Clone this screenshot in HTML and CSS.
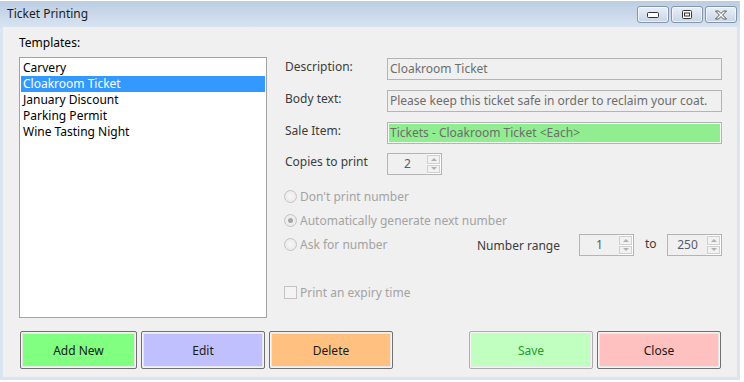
FILE: index.html
```html
<!DOCTYPE html>
<html lang="en">
<head>
  <meta charset="UTF-8">
  <title>Ticket Printing</title>
  <link rel="stylesheet" href="styles.css">
</head>
<body>

  <div class="window">
    <div class="titlebar">
      <span class="title">Ticket Printing</span>
      <div class="caption-buttons">
        <span class="cap-btn">
          <svg width="12" height="6" viewBox="0 0 12 6"><rect x="0.5" y="0.5" width="11" height="5" rx="1" fill="#fff" stroke="#333"/></svg>
        </span>
        <span class="cap-btn">
          <svg width="10" height="9" viewBox="0 0 10 9"><rect x="0.5" y="0.5" width="9" height="8" rx="1" fill="#fff" stroke="#333"/><rect x="2.5" y="3" width="5" height="3" fill="none" stroke="#333"/></svg>
        </span>
        <span class="cap-btn">
          <svg width="14" height="10" viewBox="0 0 14 10"><path d="M1.5 1 L4.5 1 L7 3.5 L9.5 1 L12.5 1 L8.6 5 L12.5 9 L9.5 9 L7 6.5 L4.5 9 L1.5 9 L5.4 5 Z" fill="#fff" stroke="#555" stroke-linejoin="round"/></svg>
        </span>
      </div>
    </div>

    <div class="client">
      <div class="main">
        <div class="templates">
          <div class="templates-label">Templates:</div>
          <ul class="listbox">
            <li>Carvery</li>
            <li class="selected">Cloakroom Ticket</li>
            <li>January Discount</li>
            <li>Parking Permit</li>
            <li>Wine Tasting Night</li>
          </ul>
        </div>

        <div class="details">
          <div class="field-row">
            <span class="label">Description:</span>
            <div class="textbox">Cloakroom Ticket</div>
          </div>
          <div class="field-row">
            <span class="label">Body text:</span>
            <div class="textbox">Please keep this ticket safe in order to reclaim your coat.</div>
          </div>
          <div class="field-row">
            <span class="label">Sale Item:</span>
            <div class="textbox sale">Tickets - Cloakroom Ticket &lt;Each&gt;</div>
          </div>
          <div class="field-row copies">
            <span class="label">Copies to print</span>
            <div class="spinner">
              <span class="spin-value">2</span>
              <span class="spin-arrows"><span class="up"></span><span class="down"></span></span>
            </div>
          </div>

          <div class="radios">
            <div class="radio-row">
              <span class="radio"></span>
              <span class="disabled">Don't print number</span>
            </div>
            <div class="radio-row">
              <span class="radio checked"></span>
              <span class="disabled">Automatically generate next number</span>
            </div>
            <div class="radio-row">
              <span class="radio"></span>
              <span class="disabled">Ask for number</span>
              <div class="range">
                <span class="range-label">Number range</span>
                <div class="spinner">
                  <span class="spin-value">1</span>
                  <span class="spin-arrows"><span class="up"></span><span class="down"></span></span>
                </div>
                <span class="range-to">to</span>
                <div class="spinner">
                  <span class="spin-value">250</span>
                  <span class="spin-arrows"><span class="up"></span><span class="down"></span></span>
                </div>
              </div>
            </div>
          </div>

          <div class="check-row">
            <span class="checkbox"></span>
            <span class="disabled">Print an expiry time</span>
          </div>
        </div>
      </div>

      <div class="buttons">
        <div class="btn-group">
          <button class="btn add">Add New</button>
          <button class="btn edit">Edit</button>
          <button class="btn delete">Delete</button>
        </div>
        <div class="btn-group">
          <button class="btn save">Save</button>
          <button class="btn close">Close</button>
        </div>
      </div>
    </div>
  </div>

</body>
</html>
```

FILE: styles.css
```css
body {
  margin: 0;
  background: #fff;
  font-family: "Noto Sans", "DejaVu Sans", sans-serif;
  font-size: 12px;
  color: #000;
}
.window {
  width: 740px;
  height: 379px;
  margin-top: 1px;
  background: #dbe5f1;
  display: flex;
  flex-direction: column;
  box-sizing: border-box;
  padding: 0 3px 3px 3px;
}
.titlebar {
  height: 26px;
  display: flex;
  align-items: center;
  justify-content: space-between;
  background: linear-gradient(#bccde2, #d7e3f1);
  margin: 0 -3px 0 -3px;
  padding: 0 3px 0 7px;
}
.title {
  color: #1e1e1e;
  font-size: 12px;
  margin-top: -2px;
}
.caption-buttons {
  display: flex;
  gap: 2px;
  align-self: flex-start;
  margin-top: 5px;
}
.cap-btn {
  width: 30px;
  height: 15px;
  border: 1px solid #8595ab;
  border-radius: 3px;
  background: linear-gradient(#e9eff7, #c9d6e6);
  display: flex;
  align-items: center;
  justify-content: center;
  box-shadow: inset 0 0 0 1px rgba(255,255,255,0.6);
}
.client {
  flex: 1;
  background: #f0f0f0;
  padding: 8px 0 0 16px;
}
.main {
  display: flex;
}
.templates {
  width: 248px;
  margin-right: 18px;
}
.templates-label {
  height: 16px;
  line-height: 16px;
}
.listbox {
  list-style: none;
  margin: 6px 0 0;
  padding: 2px 1px;
  height: 261px;
  box-sizing: border-box;
  background: #fff;
  border: 1px solid #a3a3a3;
}
.listbox li {
  height: 16px;
  line-height: 16px;
  padding-left: 2px;
  color: #000;
}
.listbox li.selected {
  background: #3399ff;
  color: #fff;
}
.details {
  width: 437px;
  margin-top: 23px;
}
.field-row {
  display: grid;
  grid-template-columns: 102px 335px;
  margin-bottom: 10px;
}
.field-row.copies {
  margin-top: -1px;
  margin-bottom: 0;
}
.label {
  color: #3c3c3c;
  line-height: 16px;
  padding-top: 1px;
}
.textbox {
  height: 22px;
  box-sizing: border-box;
  border: 1px solid #b4b4b4;
  background: #f0f0f0;
  color: #6d6d6d;
  line-height: 20px;
  padding-left: 2px;
  white-space: nowrap;
  overflow: hidden;
}
.textbox.sale {
  background: #90ee90;
  box-shadow: inset 0 0 0 1px #f4fff4;
}
.spinner {
  width: 55px;
  height: 22px;
  box-sizing: border-box;
  border: 1px solid #b4b4b4;
  background: #f0f0f0;
  display: flex;
}
.spin-value {
  flex: 1;
  text-align: center;
  line-height: 20px;
  color: #5a5a6e;
}
.spin-arrows {
  width: 13px;
  display: flex;
  flex-direction: column;
  background: #fff;
  padding: 1px 1px 1px 0;
  gap: 1px;
}
.spin-arrows span {
  flex: 1;
  border: 1px solid #d0d0d0;
  background: #f2f2f2;
  display: flex;
  align-items: center;
  justify-content: center;
}
.spin-arrows .up::after {
  content: "";
  border-left: 3px solid transparent;
  border-right: 3px solid transparent;
  border-bottom: 3px solid #b0b0b0;
}
.spin-arrows .down::after {
  content: "";
  border-left: 3px solid transparent;
  border-right: 3px solid transparent;
  border-top: 3px solid #b0b0b0;
}
.radios {
  margin-top: 9px;
  margin-left: -1px;
}
.radio-row, .check-row {
  height: 24px;
  display: flex;
  align-items: center;
}
.radio {
  width: 11px;
  height: 11px;
  border: 1px solid #c4c4c4;
  border-radius: 50%;
  background: radial-gradient(#f8f8f8, #e4e4e4);
  margin-right: 3px;
  display: flex;
  align-items: center;
  justify-content: center;
}
.radio.checked::after {
  content: "";
  width: 5px;
  height: 5px;
  border-radius: 50%;
  background: #a6a6a6;
}
.disabled {
  color: #a3a3a3;
}
.range {
  margin-left: auto;
  display: flex;
  align-items: center;
  margin-top: 2px;
}
.range-label {
  width: 102px;
  color: #3c3c3c;
}
.range-to {
  width: 33px;
  padding-left: 11px;
  box-sizing: border-box;
  color: #3c3c3c;
  margin-top: -4px;
}
.check-row {
  margin-top: 24px;
  margin-left: -1px;
}
.checkbox {
  width: 11px;
  height: 11px;
  border: 1px solid #c4c4c4;
  background: #f4f4f4;
  margin-right: 3px;
}
.buttons {
  display: flex;
  justify-content: space-between;
  width: 701px;
  margin-top: 13px;
  margin-left: 1px;
}
.btn-group {
  display: flex;
  gap: 4px;
}
.btn {
  width: 124px;
  height: 38px;
  font-family: "Noto Sans", "DejaVu Sans", sans-serif;
  font-size: 12px;
  color: #1a1a1a;
  border: 1px solid #707070;
  border-radius: 2px;
  box-shadow: inset 0 0 0 1px #f4f4f4, inset 0 0 0 2px #e6e6e6;
  padding: 0;
}
.btn.add {
  width: 117px;
  background: #80ff80;
}
.btn.edit {
  background: #c0c0ff;
}
.btn.delete {
  background: #ffc080;
}
.btn.save {
  background: #c0ffc0;
  color: #2a9a2a;
  border-color: #adadad;
}
.btn.close {
  background: #ffc0c0;
}
```
